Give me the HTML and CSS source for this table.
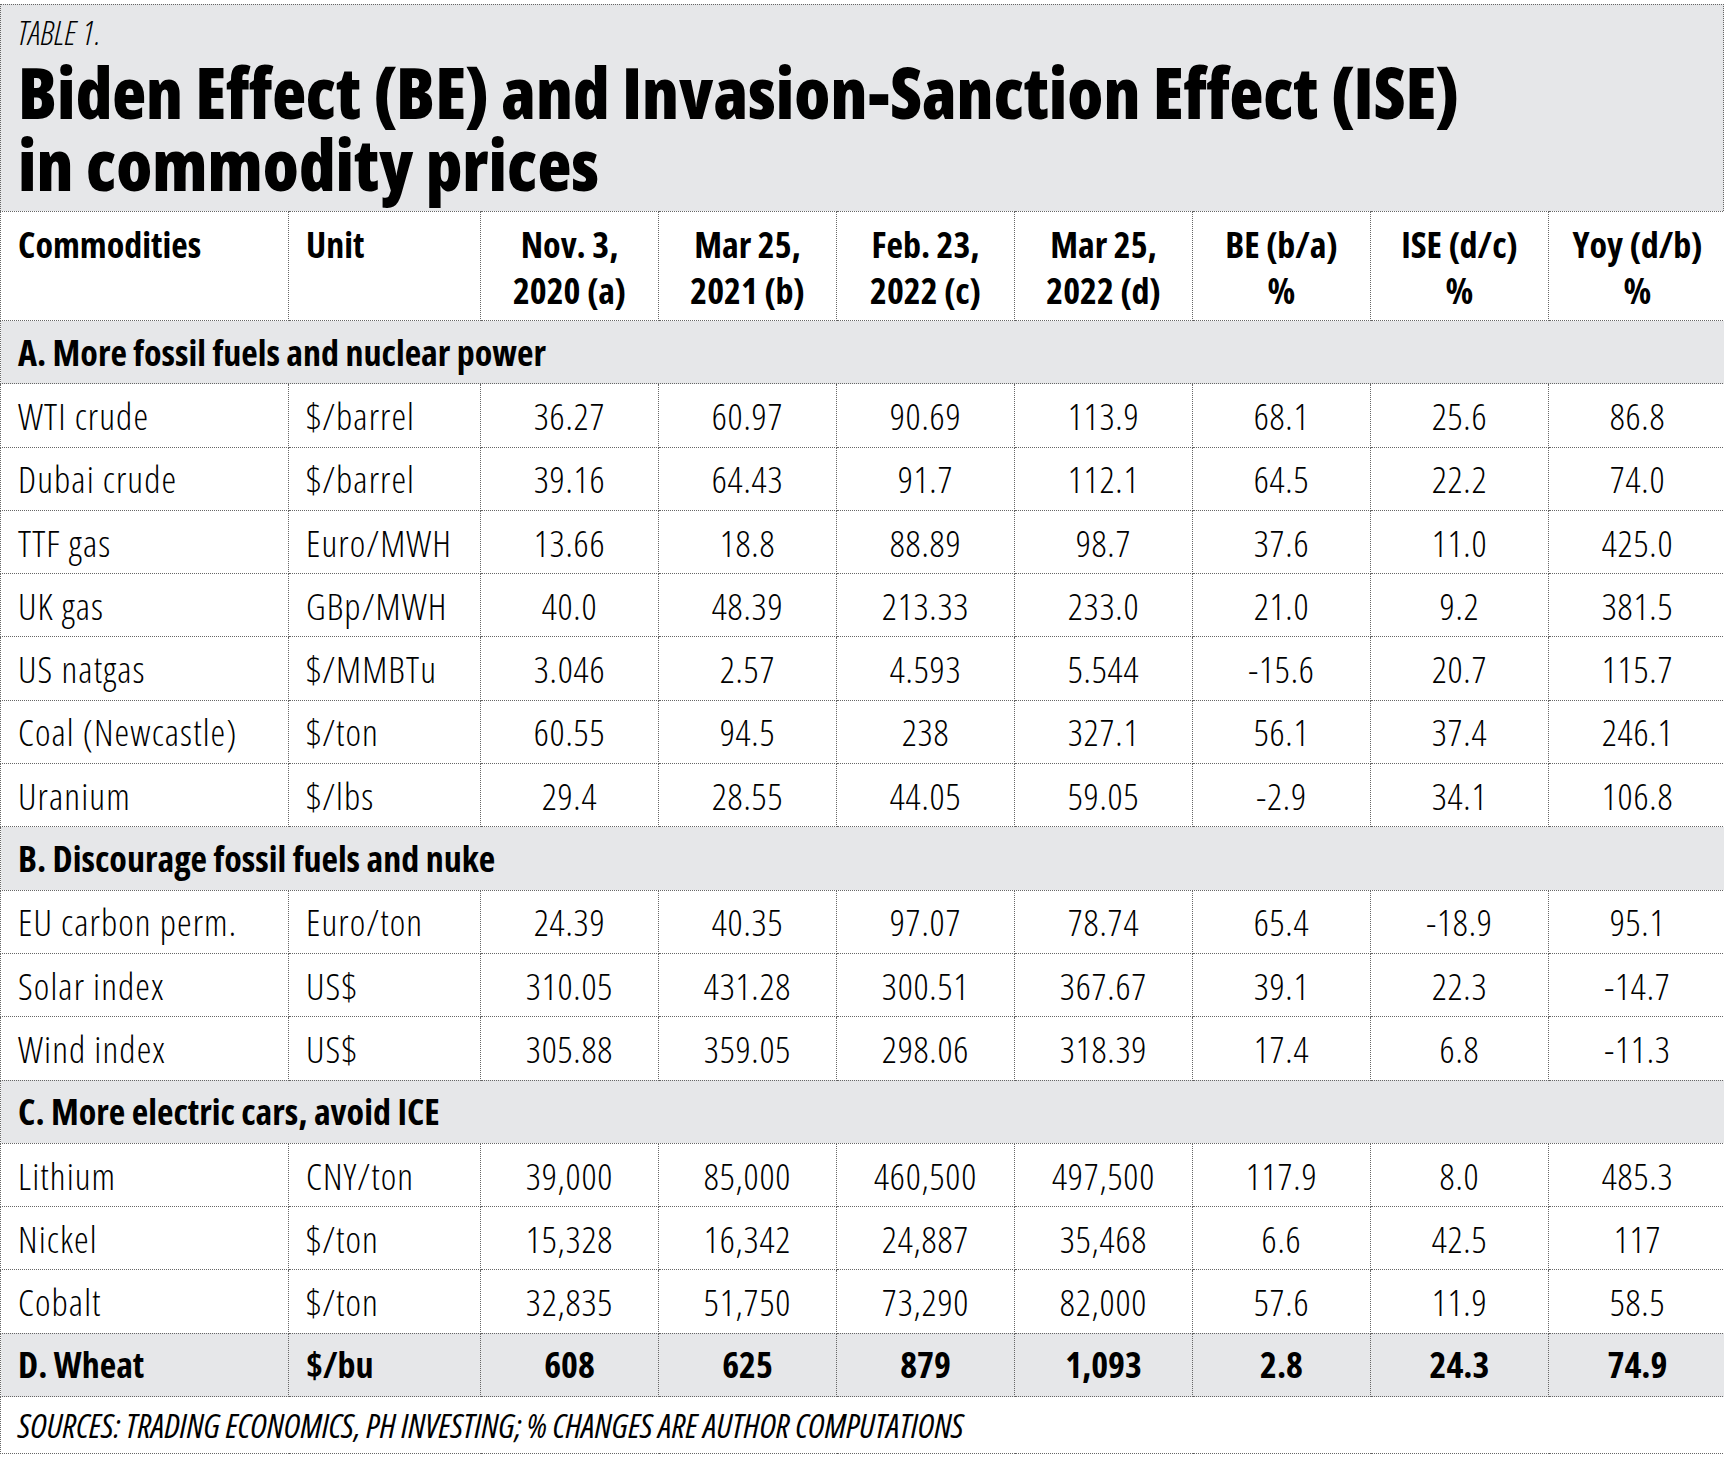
FILE: index.html
```html
<!DOCTYPE html>
<html>
<head>
<meta charset="utf-8">
<link rel="stylesheet" href="styles.css">
</head>
<body>
<div class="sheet">
  <div class="head">
    <div class="label">TABLE 1.</div>
    <h1 class="title">Biden Effect (BE) and Invasion-Sanction Effect (ISE)<br>in commodity prices</h1>
  </div>
  <table class="grid">
    <colgroup>
      <col class="c-name"><col class="c-unit"><col class="c-num"><col class="c-num"><col class="c-num"><col class="c-num"><col class="c-num"><col class="c-num"><col class="c-num">
    </colgroup>
    <tr class="hdr">
      <th class="l">Commodities</th><th class="l">Unit</th>
      <th>Nov. 3,<br>2020 (a)</th><th>Mar 25,<br>2021 (b)</th><th>Feb. 23,<br>2022 (c)</th><th>Mar 25,<br>2022 (d)</th>
      <th>BE (b/a)<br>%</th><th>ISE (d/c)<br>%</th><th>Yoy (d/b)<br>%</th>
    </tr>
    <tr class="sec"><td colspan="9">A. More fossil fuels and nuclear power</td></tr>
    <tr><td class="l">WTI crude</td><td class="l">$/barrel</td><td>36.27</td><td>60.97</td><td>90.69</td><td>113.9</td><td>68.1</td><td>25.6</td><td>86.8</td></tr>
    <tr><td class="l">Dubai crude</td><td class="l">$/barrel</td><td>39.16</td><td>64.43</td><td>91.7</td><td>112.1</td><td>64.5</td><td>22.2</td><td>74.0</td></tr>
    <tr><td class="l">TTF gas</td><td class="l">Euro/MWH</td><td>13.66</td><td>18.8</td><td>88.89</td><td>98.7</td><td>37.6</td><td>11.0</td><td>425.0</td></tr>
    <tr><td class="l">UK gas</td><td class="l">GBp/MWH</td><td>40.0</td><td>48.39</td><td>213.33</td><td>233.0</td><td>21.0</td><td>9.2</td><td>381.5</td></tr>
    <tr><td class="l">US natgas</td><td class="l">$/MMBTu</td><td>3.046</td><td>2.57</td><td>4.593</td><td>5.544</td><td>-15.6</td><td>20.7</td><td>115.7</td></tr>
    <tr><td class="l">Coal (Newcastle)</td><td class="l">$/ton</td><td>60.55</td><td>94.5</td><td>238</td><td>327.1</td><td>56.1</td><td>37.4</td><td>246.1</td></tr>
    <tr><td class="l">Uranium</td><td class="l">$/lbs</td><td>29.4</td><td>28.55</td><td>44.05</td><td>59.05</td><td>-2.9</td><td>34.1</td><td>106.8</td></tr>
    <tr class="sec"><td colspan="9">B. Discourage fossil fuels and nuke</td></tr>
    <tr><td class="l">EU carbon perm.</td><td class="l">Euro/ton</td><td>24.39</td><td>40.35</td><td>97.07</td><td>78.74</td><td>65.4</td><td>-18.9</td><td>95.1</td></tr>
    <tr><td class="l">Solar index</td><td class="l">US$</td><td>310.05</td><td>431.28</td><td>300.51</td><td>367.67</td><td>39.1</td><td>22.3</td><td>-14.7</td></tr>
    <tr><td class="l">Wind index</td><td class="l">US$</td><td>305.88</td><td>359.05</td><td>298.06</td><td>318.39</td><td>17.4</td><td>6.8</td><td>-11.3</td></tr>
    <tr class="sec"><td colspan="9">C. More electric cars, avoid ICE</td></tr>
    <tr><td class="l">Lithium</td><td class="l">CNY/ton</td><td>39,000</td><td>85,000</td><td>460,500</td><td>497,500</td><td>117.9</td><td>8.0</td><td>485.3</td></tr>
    <tr><td class="l">Nickel</td><td class="l">$/ton</td><td>15,328</td><td>16,342</td><td>24,887</td><td>35,468</td><td>6.6</td><td>42.5</td><td>117</td></tr>
    <tr><td class="l">Cobalt</td><td class="l">$/ton</td><td>32,835</td><td>51,750</td><td>73,290</td><td>82,000</td><td>57.6</td><td>11.9</td><td>58.5</td></tr>
    <tr class="total"><td class="l">D. Wheat</td><td class="l">$/bu</td><td>608</td><td>625</td><td>879</td><td>1,093</td><td>2.8</td><td>24.3</td><td>74.9</td></tr>
    <tr class="src"><td colspan="9">SOURCES: TRADING ECONOMICS, PH INVESTING; % CHANGES ARE AUTHOR COMPUTATIONS</td></tr>
  </table>
</div>
</body>
</html>
```

FILE: styles.css
```css
* { box-sizing: border-box; }
html, body { margin: 0; padding: 0; background: #fff; }
body {
  font-family: "Open Sans", "Liberation Sans", sans-serif;
  font-stretch: 75%;
  color: #000;
}
.sheet { margin-top: 4px; width: 1724px; }
.head {
  background: #e6e7e9;
  height: 207px;
  padding: 3px 17px 0;
  border: 1px dotted #666;
  border-bottom: none;
}
.label {
  font-size: 34px;
  font-style: italic;
  font-weight: 300;
  line-height: 48px;
}
.title {
  margin: 0;
  font-size: 70px;
  font-weight: 800;
  line-height: 72px;
}
.grid {
  width: 1724px;
  border-collapse: collapse;
  table-layout: fixed;
}
.c-name { width: 288px; }
.c-unit { width: 192px; }
.c-num { width: 178px; }
.grid td, .grid th {
  border: 1px dotted #666;
  padding: 0 17px;
  font-size: 37px;
  font-weight: 300;
  letter-spacing: 0.8px;
  text-align: center;
  white-space: nowrap;
}
.grid td.l { text-align: left; letter-spacing: 1.1px; }
.grid th.l { text-align: left; }
.grid tr { height: 63.3px; }
.grid .hdr { height: 109px; }
.grid .hdr th {
  font-size: 36px;
  font-weight: 700;
  letter-spacing: 0;
  vertical-align: top;
  padding-top: 10px;
  line-height: 46px;
}
.grid .sec td {
  background: #e6e7e9;
  font-size: 36px;
  font-weight: 700;
  letter-spacing: 0;
  text-align: left;
}
.grid .total td {
  background: #e6e7e9;
  font-size: 36px;
  font-weight: 700;
  letter-spacing: 0;
}
.grid .src { height: 57px; }
.grid .src td {
  font-size: 33.5px;
  font-style: italic;
  font-weight: 400;
  letter-spacing: 0;
  text-align: left;
}
```
